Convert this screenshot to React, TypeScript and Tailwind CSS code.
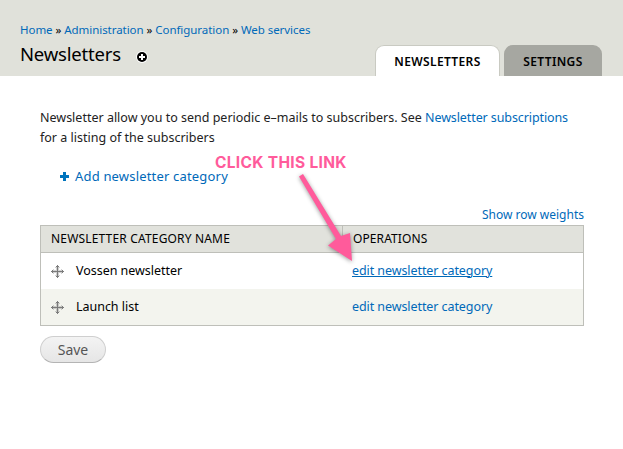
import React from 'react';

const link = 'text-[#0069b9]';

function MoveIcon() {
  return (
    <svg width="13" height="13" viewBox="0 0 13 13" className="shrink-0" shapeRendering="crispEdges">
      <path
        fill="#7c7c7c"
        d="M6 0h1v13H6zM0 6h13v1H0zM5 1h3v1H5zM5 11h3v1H5zM1 5h1v3H1zM11 5h1v3h-1z"
      />
      <path fill="#7c7c7c" opacity=".35" d="M4 2h5v1H4zM4 10h5v1H4zM2 4h1v5H2zM10 4h1v5h-1zM5 3h3v7H5zM3 5h7v3H3z" />
    </svg>
  );
}

function Row({ name, underline, shaded }: { name: string; underline?: boolean; shaded?: boolean }) {
  return (
    <div className={'flex h-9 items-center text-[12.5px] leading-5 ' + (shaded ? 'bg-[#f3f4ee]' : 'bg-white')}>
      <div className="flex w-[311px] items-center pl-2.5">
        <MoveIcon />
        <span className="ml-3 tracking-[-0.03px]">{name}</span>
      </div>
      <a
        className={
          link +
          ' tracking-[-0.08px] ' +
          (underline ? 'underline decoration-1 underline-offset-1' : '')
        }
      >
        edit newsletter category
      </a>
    </div>
  );
}

export default function App() {
  return (
    <div className="relative h-[449px] w-[623px] overflow-hidden whitespace-nowrap bg-white font-['Noto_Sans',sans-serif] text-black">
      <header className="flex h-[76px] justify-between bg-[#e0e1da] pl-5 pr-[21px]">
        <div className="pt-[22px]">
          <nav className="text-[11.5px] leading-4 tracking-[-0.05px]">
            <a className={link}>Home</a> » <a className={link}>Administration</a> »{' '}
            <a className={link}>Configuration</a> » <a className={link}>Web services</a>
          </nav>
          <div className="flex items-center pt-1">
            <h1 className="w-[116px] text-[18.5px] leading-6 tracking-[-0.2px]">Newsletters</h1>
            <svg width="12" height="12" viewBox="0 0 12 12" className="mt-[5px]">
              <circle cx="6" cy="6" r="5.9" fill="#fff" />
              <circle cx="6" cy="6" r="5" fill="#000" />
              <path d="M6 3v6M3 6h6" stroke="#fff" strokeWidth="2" />
            </svg>
          </div>
        </div>
        <div className="flex items-end gap-1 text-[12px] font-semibold">
          <div className="flex h-[31px] w-[125px] items-center justify-center rounded-t-[9px] border border-b-0 border-[#c9cac2] bg-white pt-px tracking-[0.35px]">
            NEWSLETTERS
          </div>
          <div className="flex h-[31px] w-[98px] items-center justify-center rounded-t-[9px] bg-[#a6a7a1] pt-0.5 tracking-[0.35px]">
            SETTINGS
          </div>
        </div>
      </header>
      <main className="flex w-[584px] flex-col pl-10 pt-8">
        <p className="text-[12.5px] leading-5 text-[#222]">
          Newsletter allow you to send periodic e–mails to subscribers. See{' '}
          <a className={link + ' tracking-[-0.1px]'}>Newsletter subscriptions</a>
          <br />
          for a listing of the subscribers
        </p>
        <div className="mt-[18px] flex h-5 items-center gap-1.5 pl-5">
          <svg width="9" height="9" viewBox="0 0 9 9">
            <path d="M4.500 0v9M0 4.500h9" stroke="#0074bd" strokeWidth="3" />
          </svg>
          <a className={link + ' text-[13px] leading-5 tracking-[0.18px]'}>Add newsletter category</a>
        </div>
        <a className={link + ' mt-[19px] self-end text-[12px] leading-5'}>Show row weights</a>
        <section className="border border-[#bebfb9]">
          <div className="flex h-[27px] border-b border-[#bebfb9] bg-[#e1e2dc] text-[12px] leading-[26px]">
            <div className="w-[302px] border-r border-[#bebfb9] pl-2.5 tracking-[0.17px]">NEWSLETTER CATEGORY NAME</div>
            <div className="pl-2.5 tracking-[0.1px]">OPERATIONS</div>
          </div>
          <Row name="Vossen newsletter" underline />
          <Row name="Launch list" shaded />
        </section>
        <button className="mt-2.5 h-[27px] w-[66px] rounded-full border border-[#cfcfcf] border-b-[#b4b4b4] bg-linear-to-b from-[#f3f3f3] to-[#e6e6e6] text-[14px] leading-6 text-[#555]">
          Save
        </button>
      </main>
      <div className="absolute left-[215px] top-[153px] font-['Inter',sans-serif] text-[15.5px] font-bold leading-5 tracking-[0.32px] text-[#ff5b9b]">
        CLICK THIS LINK
      </div>
      <svg className="absolute left-[290px] top-[165px] drop-shadow-[0_1px_2px_rgba(0,0,0,0.4)]" width="75" height="105" viewBox="290 165 75 105">
        <path d="M299 176.500L303 174L341 236L350 233L352 261L328 245.500L336 239Z" fill="#ff5b9b" />
      </svg>
    </div>
  );
}
